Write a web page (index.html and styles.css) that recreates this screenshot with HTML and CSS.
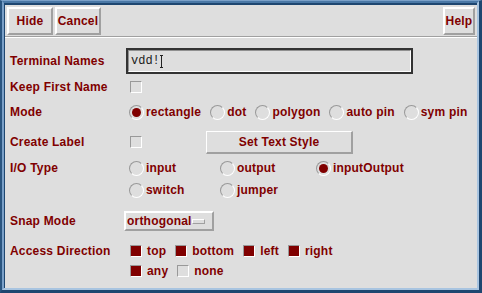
FILE: index.html
```html
<!DOCTYPE html>
<html lang="en">
<head>
    <meta charset="UTF-8">
    <title>Create Pin</title>
    <link rel="stylesheet" href="styles.css">
</head>
<body>
    <div class="window">
        <div class="frame-mid">
            <div class="frame-in">
                <div class="toolbar">
                    <div class="btn btn-hide">Hide</div>
                    <div class="btn btn-cancel">Cancel</div>
                    <div class="spacer"></div>
                    <div class="btn btn-help">Help</div>
                </div>
                <div class="form">
                    <div class="lbl">Terminal Names</div>
                    <div class="ctl">
                        <div class="field">
                            <div class="field-in"><span class="field-text">vdd!</span><span class="ibeam"></span></div>
                        </div>
                    </div>

                    <div class="lbl">Keep First Name</div>
                    <div class="ctl"><span class="check"></span></div>

                    <div class="lbl">Mode</div>
                    <div class="ctl opts">
                        <span class="opt"><span class="radio on"></span>rectangle</span>
                        <span class="opt"><span class="radio"></span>dot</span>
                        <span class="opt"><span class="radio"></span>polygon</span>
                        <span class="opt"><span class="radio"></span>auto pin</span>
                        <span class="opt"><span class="radio"></span>sym pin</span>
                    </div>

                    <div class="lbl">Create Label</div>
                    <div class="ctl">
                        <span class="check"></span>
                        <div class="btn btn-style">Set Text Style</div>
                    </div>

                    <div class="lbl">I/O Type</div>
                    <div class="ctl io">
                        <span class="opt"><span class="radio"></span>input</span>
                        <span class="opt"><span class="radio"></span>output</span>
                        <span class="opt"><span class="radio on"></span>inputOutput</span>
                    </div>
                    <div class="lbl"></div>
                    <div class="ctl io">
                        <span class="opt"><span class="radio"></span>switch</span>
                        <span class="opt"><span class="radio"></span>jumper</span>
                    </div>

                    <div class="lbl">Snap Mode</div>
                    <div class="ctl">
                        <div class="menu">orthogonal<span class="menu-bar"></span></div>
                    </div>

                    <div class="lbl">Access Direction</div>
                    <div class="ctl opts checks">
                        <span class="opt"><span class="check on"></span>top</span>
                        <span class="opt"><span class="check on"></span>bottom</span>
                        <span class="opt"><span class="check on"></span>left</span>
                        <span class="opt"><span class="check on"></span>right</span>
                    </div>
                    <div class="lbl"></div>
                    <div class="ctl opts checks">
                        <span class="opt"><span class="check on"></span>any</span>
                        <span class="opt"><span class="check"></span>none</span>
                    </div>
                </div>
            </div>
        </div>
    </div>
</body>
</html>
```
FILE: styles.css
```css
body {
    margin: 0;
    background: #dedede;
    font-family: 'Liberation Sans', Arial, sans-serif;
}
.window {
    width: 482px;
    height: 293px;
    box-sizing: border-box;
    border-style: solid;
    border-width: 1px 3px 3px 2px;
    border-color: #7aa0c8 #1e4670 #1e4670 #2a5580;
}
.frame-mid {
    height: 100%;
    box-sizing: border-box;
    border-style: solid;
    border-width: 2px 2px 2px 2px;
    border-color: #4a78a6 #a8c4e0 #a8c4e0 #7aa0c8;
}
.frame-in {
    height: 100%;
    box-sizing: border-box;
    border-style: solid;
    border-width: 2px 0 0 1px;
    border-color: #1e4670;
    background: #dedede;
}
.btn {
    box-sizing: border-box;
    border: 2px solid;
    border-color: #fff #a0a0a0 #a0a0a0 #fff;
    color: #800000;
    font-weight: bold;
    font-size: 12px;
    letter-spacing: 0.2px;
    display: flex;
    align-items: center;
    justify-content: center;
}
.toolbar {
    display: flex;
    gap: 2px;
    padding: 2px 2px 1px 2px;
    border-bottom: 1px solid #a0a0a0;
}
.toolbar .btn {
    height: 28px;
}
.btn-hide, .btn-cancel {
    width: 46px;
}
.btn-help {
    width: 32px;
}
.spacer {
    flex: 1;
}
.form {
    border-top: 1px solid #fff;
    padding: 10px 0 0 5px;
    display: grid;
    grid-template-columns: 114px 1fr;
    grid-template-rows: 26px 26px 24px 36px 16px 28px 34px 26px 14px;
    color: #800000;
    font-weight: bold;
    font-size: 12px;
    letter-spacing: 0.2px;
}
.lbl, .ctl {
    display: flex;
    align-items: center;
}
.field {
    margin-left: 2px;
    width: 287px;
    height: 26px;
    box-sizing: border-box;
    border: 2px solid #333;
}
.field-in {
    height: 100%;
    box-sizing: border-box;
    border: 1px solid;
    border-color: #909090 #fff #fff #909090;
    display: flex;
    align-items: center;
    padding-left: 2px;
}
.field-text {
    font-family: 'Liberation Mono', 'DejaVu Sans Mono', monospace;
    font-weight: normal;
    font-size: 12px;
    letter-spacing: 0;
    color: #222;
}
.ibeam {
    width: 1px;
    height: 13px;
    margin-left: 1px;
    background: #222;
    position: relative;
}
.ibeam::before, .ibeam::after {
    content: "";
    position: absolute;
    left: -1px;
    width: 3px;
    height: 1px;
    background: #222;
}
.ibeam::before { top: 0; }
.ibeam::after { bottom: 0; }
.check {
    width: 12px;
    height: 12px;
    box-sizing: border-box;
    border: 1px solid;
    border-color: #999 #fff #fff #999;
    margin-left: 6px;
    flex: none;
}
.check.on {
    background: #800000;
}
.opts {
    gap: 9px;
}
.opt {
    display: flex;
    align-items: center;
    gap: 2px;
}
.opts .opt:first-child, .io .opt:first-child {
    margin-left: 5px;
}
.checks .opt {
    gap: 5px;
}
.checks .opt .check {
    margin-left: 0;
}
.checks .opt:first-child {
    margin-left: 6px;
}
.radio {
    width: 15px;
    height: 15px;
    box-sizing: border-box;
    border-radius: 50%;
    border: 1px solid;
    border-color: #999 #fff #fff #999;
    display: flex;
    align-items: center;
    justify-content: center;
    flex: none;
}
.radio.on::after {
    content: "";
    width: 9px;
    height: 9px;
    border-radius: 50%;
    background: #800000;
}
.io {
    display: grid;
    grid-template-columns: 96px 96px auto;
    align-items: center;
}
.io .opt:first-child {
    margin-left: 5px;
}
.btn-style {
    margin-left: 64px;
    width: 147px;
    height: 23px;
    border-width: 1px 2px 2px 1px;
}
.menu {
    box-sizing: border-box;
    width: 90px;
    height: 20px;
    border: 2px solid;
    border-color: #fff #a0a0a0 #a0a0a0 #fff;
    display: flex;
    align-items: center;
    padding-left: 1px;
}
.menu-bar {
    margin-left: auto;
    margin-right: 7px;
    width: 15px;
    height: 5px;
    box-sizing: border-box;
    border: 1px solid;
    border-color: #fff #a0a0a0 #a0a0a0 #fff;
}
```
